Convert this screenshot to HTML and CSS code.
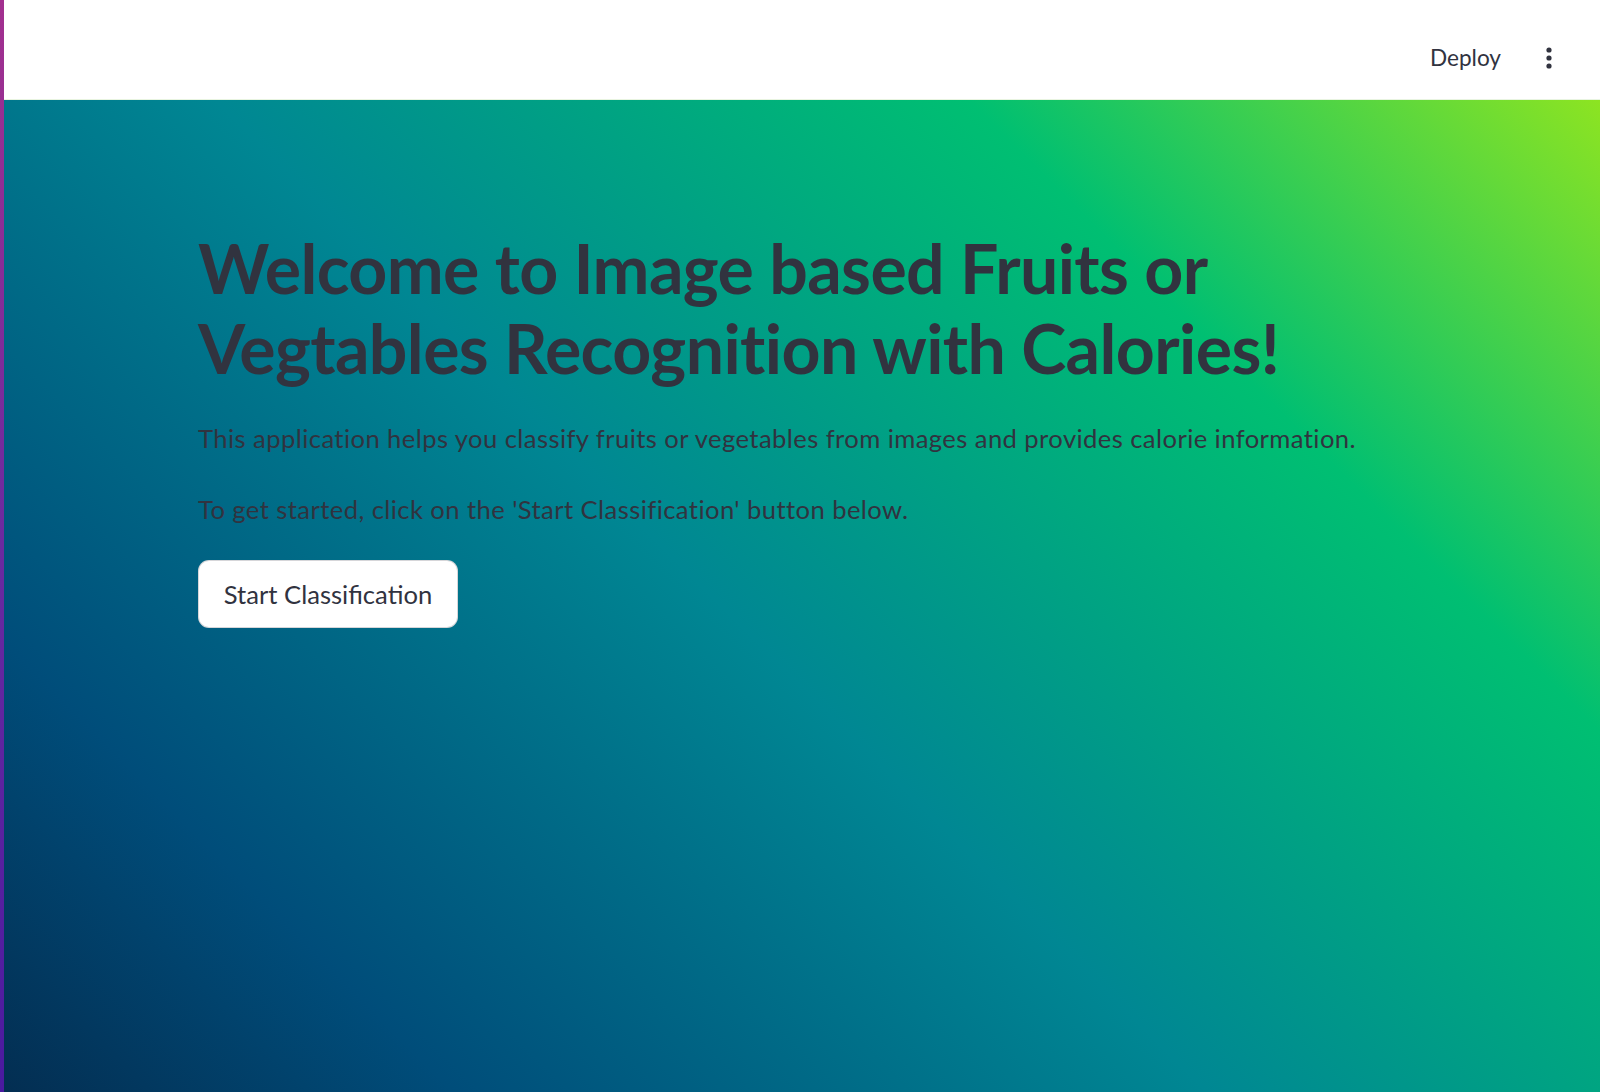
FILE: index.html
```html
<!DOCTYPE html>
<html lang="en">
<head>
<meta charset="utf-8">
<title>Fruits or Vegetables Recognition</title>
<link rel="stylesheet" href="styles.css">
</head>
<body>
<div class="screen">
  <div class="edge"></div>
  <div class="app">
    <header class="topbar">
      <button class="deploy">Deploy</button>
      <button class="menu" aria-label="Main menu">
        <svg width="8" height="24" viewBox="0 0 8 24"><circle cx="4" cy="4" r="2.6" fill="#31333F"/><circle cx="4" cy="12" r="2.6" fill="#31333F"/><circle cx="4" cy="20" r="2.6" fill="#31333F"/></svg>
      </button>
    </header>
    <main class="content">
      <h1 class="title">Welcome to Image based Fruits or Vegtables Recognition with Calories!</h1>
      <p class="text">This application helps you classify fruits or vegetables from images and provides calorie information.</p>
      <p class="text">To get started, click on the 'Start Classification' button below.</p>
      <button class="start">Start Classification</button>
    </main>
  </div>
</div>
</body>
</html>
```
FILE: styles.css
```css
* { box-sizing: border-box; }
html, body { margin: 0; padding: 0; height: 100%; }
body {
  font-family: "Lato", "Open Sans", sans-serif;
  color: #31333F;
  overflow: hidden;
}
.screen {
  display: flex;
  height: 1092px;
}
.edge {
  width: 4px;
  flex: none;
  background: linear-gradient(to bottom, #a3308f, #6a2aa0 50%, #4a1aa0);
}
.app {
  flex: 1;
  display: flex;
  flex-direction: column;
}
.topbar {
  height: 100px;
  flex: none;
  background: #ffffff;
  display: flex;
  align-items: center;
  justify-content: flex-end;
  padding: 16px 47px 0 0;
  gap: 44px;
  border-bottom: 1px solid #e8f4e0;
}
.deploy {
  background: none;
  border: none;
  font-family: inherit;
  font-size: 22.6px;
  color: #31333F;
  padding: 0;
  cursor: pointer;
}
.menu {
  background: none;
  border: none;
  padding: 0;
  display: flex;
  align-items: center;
}
.content {
  flex: 1;
  background-image: linear-gradient(45deg, #051937 -11.6%, #004d7a 17.4%, #008793 46.5%, #00bf72 75.6%, #a8eb12 104.7%);
  padding: 128px 0 0 194px;
}
.title {
  margin: 0 0 30px;
  font-size: 68px;
  line-height: 80px;
  font-weight: 700;
  letter-spacing: -0.6px;
  max-width: 1120px;
  color: #31333F;
}
.text {
  margin: 0 0 30px;
  font-size: 25.6px;
  line-height: 41px;
  letter-spacing: 0.42px;
}
.start {
  margin-top: 0;
  width: 260px;
  height: 68px;
  background: #ffffff;
  border: 1px solid rgba(49, 51, 63, 0.2);
  border-radius: 11px;
  font-family: inherit;
  font-size: 25.6px;
  color: #31333F;
  cursor: pointer;
}
```
